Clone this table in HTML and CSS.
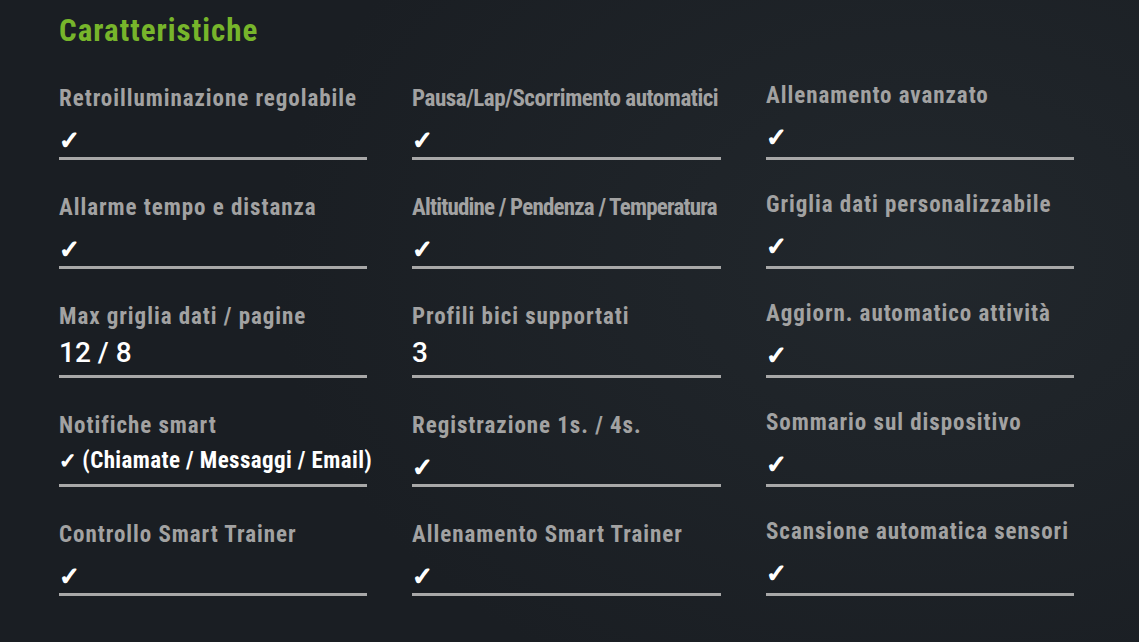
FILE: index.html
```html
<!DOCTYPE html>
<html lang="it">
<head>
<meta charset="utf-8">
<title>Caratteristiche</title>
<link rel="stylesheet" href="styles.css">
</head>
<body>
<section class="features">
  <h2 class="title">Caratteristiche</h2>
  <div class="grid">
    <div class="cell"><div class="label">Retroilluminazione regolabile</div><div class="value"><div class="line chk"><span class="check">✓</span></div></div></div>
    <div class="cell"><div class="label tight1">Pausa/Lap/Scorrimento automatici</div><div class="value"><div class="line chk"><span class="check">✓</span></div></div></div>
    <div class="cell c3"><div class="label">Allenamento avanzato</div><div class="value"><div class="line chk"><span class="check">✓</span></div></div></div>

    <div class="cell"><div class="label">Allarme tempo e distanza</div><div class="value"><div class="line chk"><span class="check">✓</span></div></div></div>
    <div class="cell"><div class="label tight2">Altitudine / Pendenza / Temperatura</div><div class="value"><div class="line chk"><span class="check">✓</span></div></div></div>
    <div class="cell c3"><div class="label">Griglia dati personalizzabile</div><div class="value"><div class="line chk"><span class="check">✓</span></div></div></div>

    <div class="cell"><div class="label">Max griglia dati / pagine</div><div class="value"><div class="line num">12 / 8</div></div></div>
    <div class="cell"><div class="label">Profili bici supportati</div><div class="value"><div class="line num">3</div></div></div>
    <div class="cell c3"><div class="label">Aggiorn. automatico attività</div><div class="value"><div class="line chk"><span class="check">✓</span></div></div></div>

    <div class="cell"><div class="label">Notifiche smart</div><div class="value"><div class="line txt"><span class="check small">✓</span> (Chiamate / Messaggi / Email)</div></div></div>
    <div class="cell"><div class="label">Registrazione 1s. / 4s.</div><div class="value"><div class="line chk"><span class="check">✓</span></div></div></div>
    <div class="cell c3"><div class="label">Sommario sul dispositivo</div><div class="value"><div class="line chk"><span class="check">✓</span></div></div></div>

    <div class="cell"><div class="label">Controllo Smart Trainer</div><div class="value"><div class="line chk"><span class="check">✓</span></div></div></div>
    <div class="cell"><div class="label">Allenamento Smart Trainer</div><div class="value"><div class="line chk"><span class="check">✓</span></div></div></div>
    <div class="cell c3"><div class="label">Scansione automatica sensori</div><div class="value"><div class="line chk"><span class="check">✓</span></div></div></div>
  </div>
</section>
</body>
</html>
```
FILE: styles.css
```css
html, body {
  margin: 0;
  padding: 0;
}
body {
  width: 1139px;
  height: 642px;
  overflow: hidden;
  background:
    radial-gradient(ellipse 650px 480px at 920px 260px, rgba(40, 47, 52, 0.55) 0%, rgba(27, 31, 36, 0) 100%),
    #1a1e23;
  font-family: "Liberation Sans Narrow", "Roboto Condensed", "DejaVu Sans Condensed", sans-serif;
  font-stretch: condensed;
}
.features {
  padding: 13px 0 0 59px;
}
.title {
  margin: 0;
  color: #77b52b;
  font-size: 31px;
  line-height: 36px;
  font-weight: 700;
  letter-spacing: 1px;
}
.grid {
  display: grid;
  grid-template-columns: 308px 309px 308px;
  column-gap: 45px;
  margin-top: 2px;
}
.cell {
  height: 109px;
  display: flex;
  flex-direction: column;
  justify-content: flex-end;
  border-bottom: 3px solid #a8a8a8;
  box-sizing: border-box;
}
.label {
  color: #a2a2a2;
  font-size: 23px;
  line-height: 28px;
  font-weight: 700;
  letter-spacing: 0.95px;
  white-space: nowrap;
}
.label.tight1 {
  letter-spacing: -0.45px;
}
.label.tight2 {
  letter-spacing: -0.8px;
}
.value {
  height: 44px;
  display: flex;
  align-items: flex-end;
  color: #ffffff;
  font-size: 23px;
  font-weight: 700;
}
.line {
  white-space: nowrap;
}
.line.chk {
  line-height: 23px;
  margin-bottom: 4px;
}
.line.txt {
  line-height: 23px;
  margin-bottom: 11px;
  letter-spacing: 0.4px;
}
.line.num {
  font-family: Roboto, "Liberation Sans", sans-serif;
  font-stretch: normal;
  font-weight: 500;
  font-size: 28px;
  line-height: 28px;
  margin-bottom: 8px;
  letter-spacing: 0;
}
.check {
  font-family: "DejaVu Sans", sans-serif;
  font-stretch: normal;
  font-weight: 700;
  font-size: 25px;
  line-height: 23px;
  letter-spacing: 0;
  -webkit-text-stroke: 1.4px #ffffff;
  color: #ffffff;
  display: inline-block;
  margin-left: 0;
}
.check.small {
  font-size: 21px;
  -webkit-text-stroke: 1.2px #ffffff;
}
.c3 .label {
  margin-bottom: 3px;
}
.c3 .line.chk {
  margin-bottom: 7px;
}
```
